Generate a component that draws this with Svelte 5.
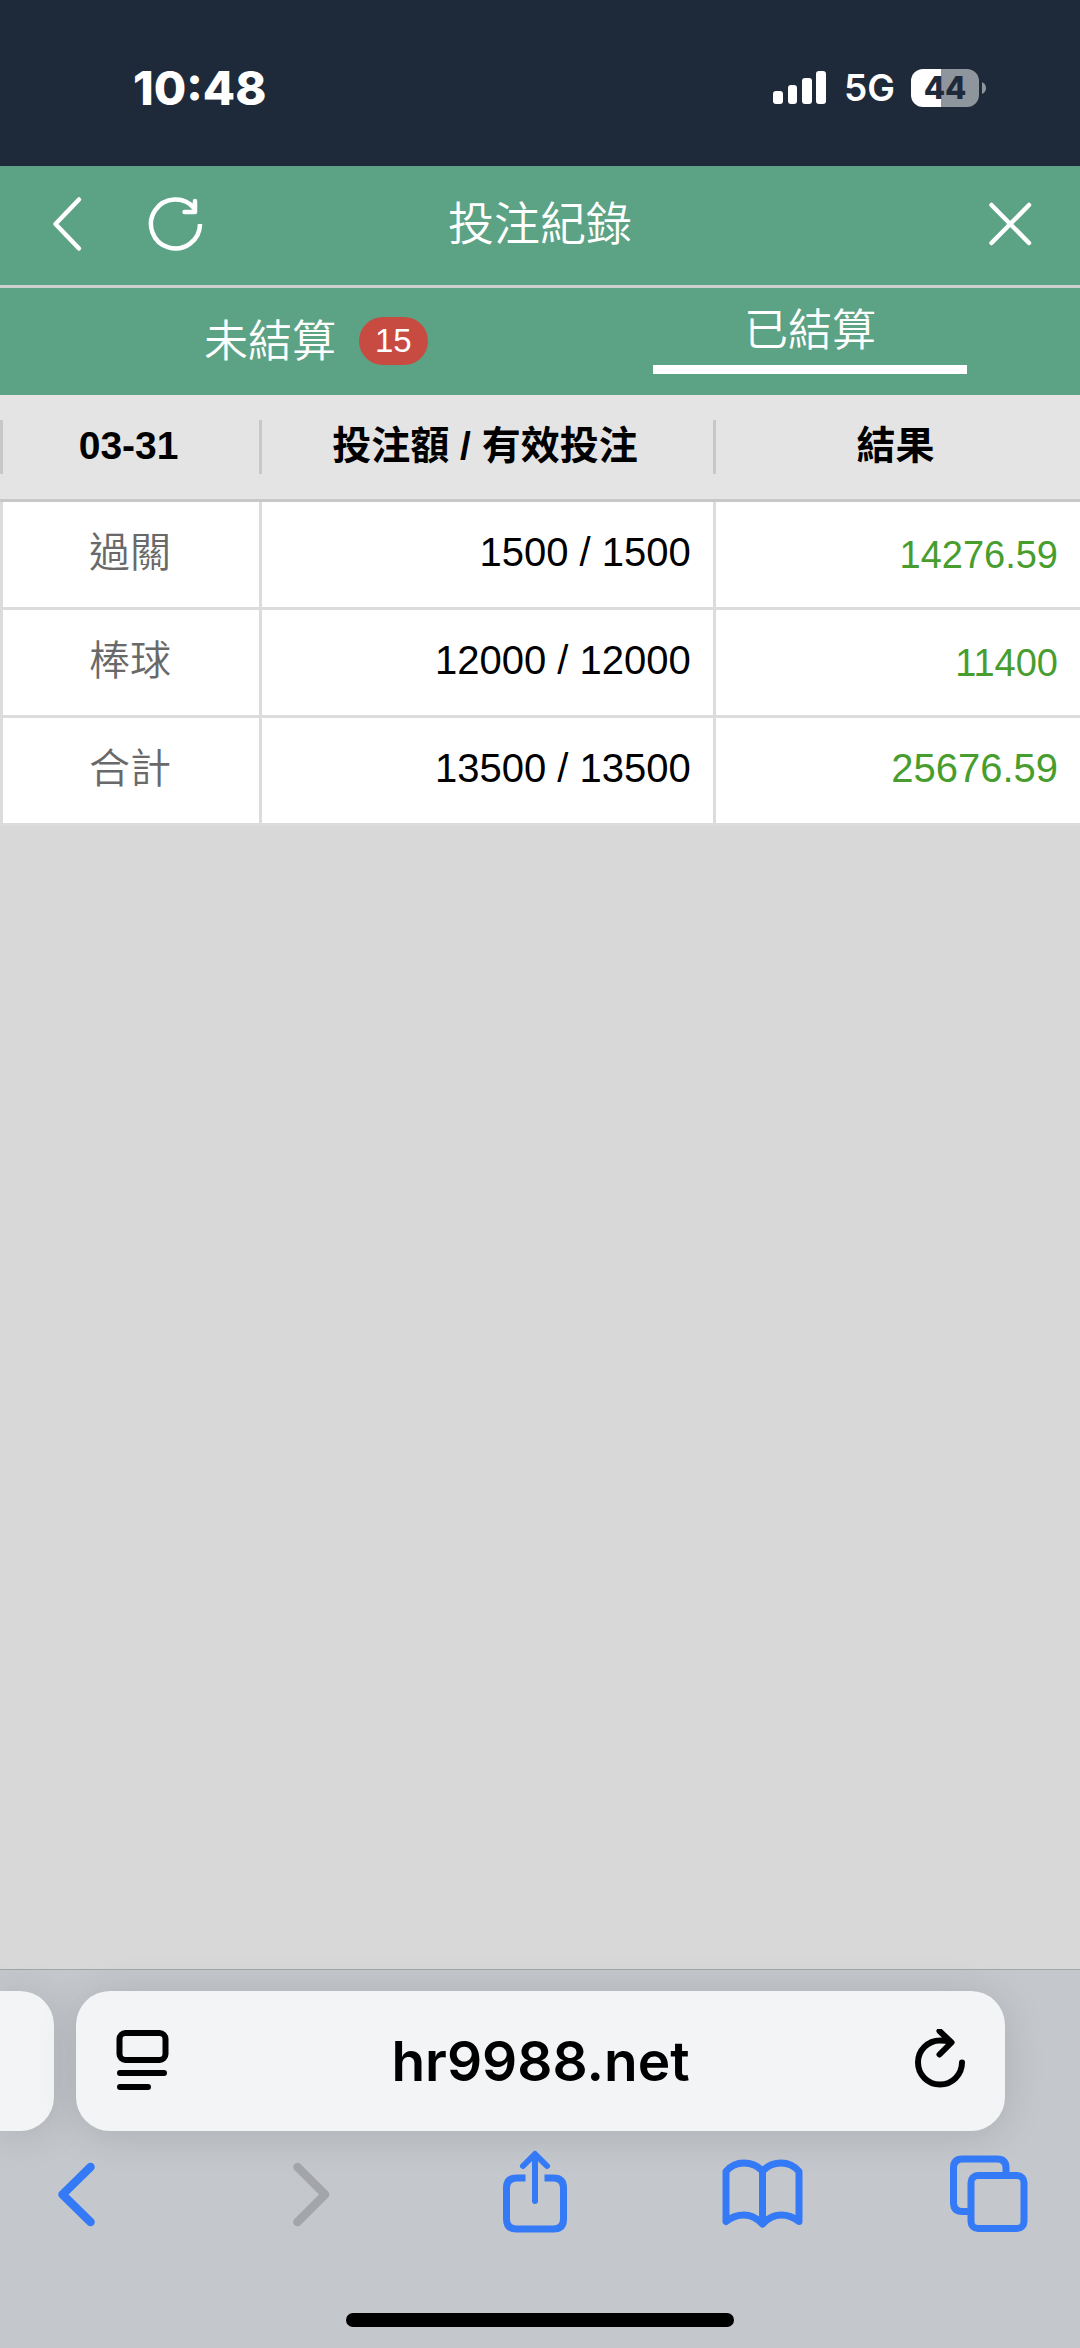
<script>
  const rows = [
    { name: '過關', stake: '1500 / 1500', result: '14276.59' },
    { name: '棒球', stake: '12000 / 12000', result: '11400' },
    { name: '合計', stake: '13500 / 13500', result: '25676.59', total: true }
  ];
  let active = $state('settled');
  let address = $state('hr9988.net');
</script>

<div class="screen">
  <div class="status">
    <time class="clock">10:48</time>
    <div class="indicators">
      <svg width="54" height="34" viewBox="0 0 54 34" fill="#fff" aria-hidden="true">
        <rect x="0" y="20" width="10" height="13" rx="3" />
        <rect x="15" y="14" width="9" height="19" rx="3" />
        <rect x="29" y="7" width="10" height="26" rx="3" />
        <rect x="43" y="0" width="10" height="33" rx="3" />
      </svg>
      <span class="network">5G</span>
      <div class="battery">
        <span class="cell">44</span>
        <svg width="4" height="12" viewBox="0 0 4 12" aria-hidden="true"><path d="M0 0Q4 2 4 6T0 12Z" fill="#8e959d" /></svg>
      </div>
    </div>
  </div>

  <header class="nav">
    <div class="side">
      <button aria-label="返回">
        <svg width="60" height="60" viewBox="0 0 60 60" stroke-width="4.5"><path d="M42 5.500 18.500 30 42 54.500" /></svg>
      </button>
      <button aria-label="重新整理">
        <svg width="60" height="60" viewBox="0 0 60 60" stroke-width="4.5"><path class="butt" d="M53 30A24.500 24.500 0 1 1 47.500 14.500" /><path d="M48 7V18H37.500" /></svg>
      </button>
    </div>
    <h1>投注紀錄</h1>
    <div class="side end">
      <button aria-label="關閉">
        <svg width="60" height="60" viewBox="0 0 60 60" stroke-width="4.5"><path d="M8.500 11 46 49M46 11 8.500 49" /></svg>
      </button>
    </div>
  </header>

  <nav class="tabs">
    <button class:active={active === 'open'} onclick={() => (active = 'open')}>
      <span class="label">未結算<span class="badge">15</span></span>
    </button>
    <button class:active={active === 'settled'} onclick={() => (active = 'settled')}>
      <span class="label">已結算</span>
    </button>
  </nav>

  <main>
    <table>
      <thead>
        <tr>
          <th class="c1" scope="col"><span>03-31</span></th>
          <th class="c2" scope="col"><span>投注額 / 有效投注</span></th>
          <th class="c3" scope="col"><span>結果</span></th>
        </tr>
      </thead>
      <tbody>
        {#each rows as row}
          <tr class:total={row.total}>
            <td class="name">{row.name}</td>
            <td class="stake">{row.stake}</td>
            <td class="result">{row.result}</td>
          </tr>
        {/each}
      </tbody>
    </table>
  </main>

  <footer>
    <div class="cards">
      <div class="previous"></div>
      <div class="address">
        <button aria-label="頁面選單">
          <svg width="60" height="64" viewBox="0 0 60 64" stroke-width="6"><rect x="9.500" y="4" width="46" height="27" rx="6" /><path d="M10 44H54M10 58H38" /></svg>
        </button>
        <input type="text" aria-label="網址" bind:value={address} />
        <button aria-label="重新載入">
          <svg width="60" height="64" viewBox="0 0 60 64" stroke-width="6"><path d="M51 33.500A22 22 0 1 1 29 11.500Q35 11.500 40 13M28.500 2 40.500 13.500 28.500 25.500" /></svg>
        </button>
      </div>
    </div>
    <div class="toolbar">
      <button aria-label="上一頁">
        <svg width="88" height="88" viewBox="0 0 88 88" stroke-width="8.5"><path d="M58.500 19 30.500 46.500 58.500 74" /></svg>
      </button>
      <button aria-label="下一頁" disabled>
        <svg width="88" height="88" viewBox="0 0 88 88" stroke-width="8.5"><path d="M37.500 19 65 46.500 37.500 74" /></svg>
      </button>
      <button aria-label="分享">
        <svg width="88" height="88" viewBox="0 0 88 88" stroke-width="7"><path class="butt" d="M36.500 30H27.500Q17.500 30 17.500 40V71Q17.500 81 27.500 81H64.500Q74.500 81 74.500 71V40Q74.500 30 64.500 30H55.500" /><path stroke-width="6" d="M46 53V7M34 18 46 6 58 18" /></svg>
      </button>
      <button aria-label="書籤">
        <svg width="88" height="88" viewBox="0 0 88 88" stroke-width="7"><path d="M9 73.500V23.500Q16 15 27 15T45.500 23Q53 15 64 15T82 23.500V73.500Q74 67 64 67T45.500 76Q37 67 27 67T9 73.500ZM45.500 23.500V75.500" /></svg>
      </button>
      <button aria-label="分頁">
        <svg width="88" height="88" viewBox="0 0 88 88" stroke-width="7"><path class="butt" d="M61 27V20Q61 11 52 11H17.500Q8.500 11 8.500 20V54.500Q8.500 63.500 17.500 63.500H26" /><rect x="26" y="27.500" width="53" height="53" rx="7" /></svg>
      </button>
    </div>
    <div class="home"></div>
  </footer>
</div>

<style>
  :global(body) {
    margin: 0;
    background: #d8d8d8;
  }
  .screen {
    min-height: 100vh;
    display: flex;
    flex-direction: column;
    overflow: hidden;
    background: #d8d8d8;
    font-family: 'Liberation Sans', 'Noto Sans CJK TC', sans-serif;
    color: #000;
  }
  button {
    border: 0;
    padding: 0;
    background: none;
    color: inherit;
    font: inherit;
    cursor: pointer;
  }
  svg {
    display: block;
  }
  button svg {
    fill: none;
    stroke: currentColor;
    stroke-linecap: round;
    stroke-linejoin: round;
  }
  button svg .butt {
    stroke-linecap: butt;
  }

  .status {
    box-sizing: border-box;
    height: 166px;
    padding: 10px 94px 0 133px;
    display: flex;
    align-items: center;
    justify-content: space-between;
    background: #1e2a39;
    color: #fff;
    font-family: Inter, sans-serif;
  }
  .clock {
    font-size: 47px;
    font-weight: 800;
    line-height: 56px;
  }
  .indicators {
    display: flex;
    align-items: center;
  }
  .network {
    margin: 0 16px 0 17px;
    font-size: 37px;
    font-weight: 600;
    line-height: 40px;
  }
  .battery {
    display: flex;
    align-items: center;
    gap: 3px;
  }
  .cell {
    width: 68px;
    height: 38px;
    border-radius: 12px;
    background: linear-gradient(90deg, #fff 44%, #8e959d 44%);
    color: #1e2a39;
    font-size: 31px;
    font-weight: 800;
    line-height: 38px;
    text-align: center;
  }

  .nav {
    height: 116px;
    padding: 0 37px 3px;
    display: grid;
    grid-template-columns: 1fr auto 1fr;
    align-items: center;
    background: #5ca284;
    color: #fff;
    border-bottom: 3px solid #cbcfcd;
  }
  .side {
    display: flex;
    gap: 50px;
  }
  .end {
    justify-content: flex-end;
  }
  h1 {
    margin: 0;
    font-size: 46px;
    font-weight: 350;
    line-height: 60px;
  }

  .tabs {
    height: 107px;
    display: grid;
    grid-template-columns: 1fr 1fr;
    background: #5ca284;
    color: #fff;
    font-size: 44px;
  }
  .tabs button {
    display: flex;
    align-items: center;
    justify-content: center;
    font-weight: 350;
  }
  .label {
    position: relative;
    line-height: 60px;
    text-align: center;
  }
  .active .label {
    width: 58%;
    margin-bottom: 8px;
    padding-bottom: 4px;
    border-bottom: 9px solid #fff;
  }
  .badge {
    position: absolute;
    top: 5px;
    left: 100%;
    margin-left: 23px;
    padding: 0 16px;
    border-radius: 24px;
    background: #c84b42;
    font-size: 33px;
    line-height: 48px;
  }

  main {
    flex: 1;
  }
  table {
    width: 100%;
    table-layout: fixed;
    border-collapse: separate;
    border-spacing: 0;
  }
  th,
  td {
    box-sizing: border-box;
  }
  th {
    height: 107px;
    padding: 25px 0 0;
    vertical-align: top;
    background: #e4e4e4;
    border-bottom: 3px solid #c8c8c8;
    font-size: 39px;
    font-weight: 700;
  }
  th span {
    display: block;
    padding: 0 5px 2px 0;
    border-left: 3px solid #c8c8c8;
    line-height: 52px;
  }
  .c1 {
    width: 24%;
  }
  .c2 {
    width: 42%;
  }
  .c3 {
    width: 34%;
  }
  td {
    height: 108px;
    padding: 0 22px 5px;
    background: #fff;
    border-left: 3px solid #dcdcdc;
    border-bottom: 3px solid #dcdcdc;
    font-size: 40px;
    line-height: 60px;
    text-align: right;
  }
  .name {
    padding: 0 2px 3px 0;
    color: #696969;
    font-size: 41px;
    font-weight: 350;
    text-align: center;
  }
  .result {
    padding-bottom: 0;
    color: #479d2d;
    font-size: 38px;
  }
  .total .result {
    padding-bottom: 5px;
    font-size: 40px;
  }

  footer {
    padding: 21px 0;
    background: #c4c7cc;
    border-top: 1px solid #a2a6aa;
  }
  .cards {
    display: flex;
    gap: 22px;
    padding-right: 75px;
  }
  .previous,
  .address {
    height: 140px;
    background: #f3f4f6;
    box-shadow: 0 4px 40px rgba(0, 0, 0, 0.13);
  }
  .previous {
    flex: none;
    width: 54px;
    border-radius: 0 34px 34px 0;
  }
  .address {
    box-sizing: border-box;
    flex: 1;
    min-width: 0;
    display: flex;
    align-items: center;
    padding: 0 34px;
    border-radius: 34px;
  }
  .address input {
    flex: 1;
    min-width: 0;
    padding: 0;
    border: 0;
    background: none;
    color: #000;
    font-family: Inter, sans-serif;
    font-size: 55px;
    font-weight: 600;
    line-height: 70px;
    text-align: center;
  }
  .toolbar {
    display: flex;
    justify-content: space-between;
    margin-top: 17px;
    padding: 0 47px 0 32px;
    color: #347af6;
  }
  .toolbar button:disabled {
    color: #a4a5a8;
  }
  .home {
    width: 36%;
    height: 14px;
    margin: 77px auto 0;
    border-radius: 7px;
    background: #000;
  }
</style>
